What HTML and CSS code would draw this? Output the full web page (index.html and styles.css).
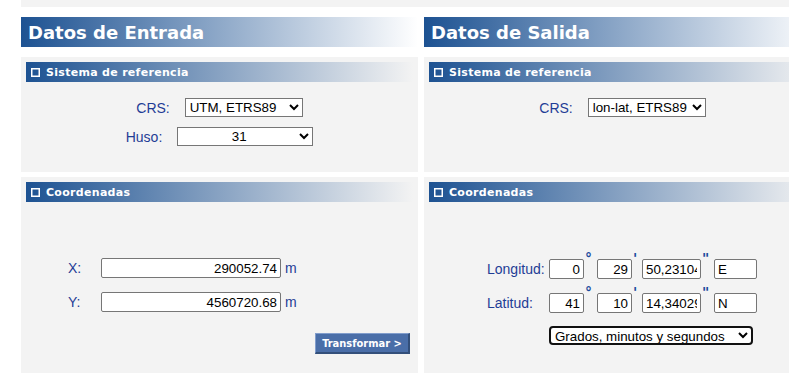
FILE: index.html
```html
<!DOCTYPE html>
<html lang="es">
<head>
<meta charset="utf-8">
<title>Transformación de coordenadas</title>
<link rel="stylesheet" href="styles.css">
</head>
<body>
<div class="page">
  <div class="top-strip"></div>
  <div class="columns">
    <section class="col">
      <h2 class="col-title">Datos de Entrada</h2>
      <div class="box box-ref">
        <div class="box-head"><svg class="chk" width="9" height="9" viewBox="0 0 9 9"><rect x="0.75" y="0.75" width="7.5" height="7.5" fill="none" stroke="#fff" stroke-width="1.5"/></svg><span>Sistema de referencia</span></div>
        <div class="ref-rows">
          <div class="ref-row"><span class="lbl">CRS:</span><select class="sel sel-crs"><option>UTM, ETRS89</option></select></div>
          <div class="ref-row"><span class="lbl">Huso:</span><select class="sel sel-huso"><option>31</option></select></div>
        </div>
      </div>
      <div class="box box-coord">
        <div class="box-head"><svg class="chk" width="9" height="9" viewBox="0 0 9 9"><rect x="0.75" y="0.75" width="7.5" height="7.5" fill="none" stroke="#fff" stroke-width="1.5"/></svg><span>Coordenadas</span></div>
        <div class="xy-rows">
          <div class="xy-row"><span class="lbl xy-lbl">X:</span><input class="inp inp-xy" type="text" value="290052.74"><span class="lbl unit">m</span></div>
          <div class="xy-row"><span class="lbl xy-lbl">Y:</span><input class="inp inp-xy" type="text" value="4560720.68"><span class="lbl unit">m</span></div>
          <button class="btn" type="button">Transformar &gt;</button>
        </div>
      </div>
    </section>
    <section class="col">
      <h2 class="col-title">Datos de Salida</h2>
      <div class="box box-ref">
        <div class="box-head"><svg class="chk" width="9" height="9" viewBox="0 0 9 9"><rect x="0.75" y="0.75" width="7.5" height="7.5" fill="none" stroke="#fff" stroke-width="1.5"/></svg><span>Sistema de referencia</span></div>
        <div class="ref-rows">
          <div class="ref-row"><span class="lbl">CRS:</span><select class="sel sel-crs"><option>lon-lat, ETRS89</option></select></div>
        </div>
      </div>
      <div class="box box-coord">
        <div class="box-head"><svg class="chk" width="9" height="9" viewBox="0 0 9 9"><rect x="0.75" y="0.75" width="7.5" height="7.5" fill="none" stroke="#fff" stroke-width="1.5"/></svg><span>Coordenadas</span></div>
        <div class="ll-rows">
          <div class="ll-row"><span class="lbl ll-lbl">Longitud:</span><input class="inp inp-deg" type="text" value="0"><span class="mark mark-deg">°</span><input class="inp inp-min" type="text" value="29"><span class="mark mark-min">'</span><input class="inp inp-sec" type="text" value="50,231047"><span class="mark mark-sec">"</span><input class="inp inp-hem" type="text" value="E"></div>
          <div class="ll-row"><span class="lbl ll-lbl">Latitud:</span><input class="inp inp-deg" type="text" value="41"><span class="mark mark-deg">°</span><input class="inp inp-min" type="text" value="10"><span class="mark mark-min">'</span><input class="inp inp-sec" type="text" value="14,340298"><span class="mark mark-sec">"</span><input class="inp inp-hem" type="text" value="N"></div>
          <select class="sel sel-fmt"><option>Grados, minutos y segundos</option></select>
        </div>
      </div>
    </section>
  </div>
</div>
</body>
</html>
```
FILE: styles.css
```css
html, body {
  margin: 0;
  padding: 0;
  background: #fff;
}
body {
  width: 789px;
  height: 373px;
  overflow: hidden;
  font-family: "Liberation Sans", Arial, sans-serif;
}
.page {
  padding-left: 21px;
  overflow: hidden;
}
.top-strip {
  height: 7px;
  background: #f3f3f3;
}
.columns {
  display: grid;
  grid-template-columns: 397px 397px;
  column-gap: 6px;
  margin-top: 10px;
}
.col {
  display: flex;
  flex-direction: column;
}
.col-title {
  margin: 0;
  height: 30px;
  display: flex;
  align-items: center;
  padding-left: 7px;
  font: bold 18px "DejaVu Sans", Verdana, sans-serif;
  color: #fff;
  background: linear-gradient(90deg, #1d5292 0%, #ffffff 100%);
}
.box {
  background: #f3f3f3;
  padding: 5px;
  box-sizing: border-box;
  display: flex;
  flex-direction: column;
}
.box-ref {
  margin-top: 10px;
  height: 115px;
}
.box-coord {
  margin-top: 5px;
  height: 200px;
}
.box-head {
  height: 20px;
  display: flex;
  align-items: center;
  gap: 6px;
  padding-left: 5px;
  background: linear-gradient(90deg, #1d5292 0%, #f3f3f3 100%);
  color: #fff;
  font: bold 11px "DejaVu Sans", Verdana, sans-serif;
  letter-spacing: 0.3px;
}
.chk {
  flex: none;
  display: block;
}
.lbl {
  font-size: 14px;
  color: #1f3d96;
}
.sel {
  font: 13.33px "Liberation Sans", Arial, sans-serif;
  height: 19px;
  box-sizing: border-box;
  color: #000;
  background-color: #fff;
}
.ref-rows {
  padding-top: 16px;
  display: flex;
  flex-direction: column;
  gap: 10px;
}
.ref-row {
  display: flex;
  justify-content: center;
  align-items: center;
  gap: 15px;
}
.sel-crs {
  width: 118px;
}
.sel-huso {
  width: 136px;
  text-align: center;
  text-align-last: center;
}
.inp {
  font: 13.33px "Liberation Sans", Arial, sans-serif;
  color: #000;
  height: 20px;
  box-sizing: border-box;
  border: 1px solid #767676;
  border-radius: 2px;
  background: #fff;
  padding: 1px 3px;
  margin: 0;
}
.xy-rows {
  padding-top: 56px;
  display: flex;
  flex-direction: column;
  gap: 14px;
}
.xy-row {
  display: flex;
  align-items: center;
}
.xy-lbl {
  margin-left: 42px;
  width: 33px;
}
.inp-xy {
  width: 180px;
  text-align: right;
}
.unit {
  margin-left: 4px;
}
.btn {
  align-self: flex-end;
  margin: 7px 3px 0 0;
  width: 95px;
  height: 21px;
  padding: 0;
  background: #4a6ea8;
  color: #fff;
  font: bold 11px "DejaVu Sans Condensed", "DejaVu Sans", sans-serif;
  border-style: solid;
  border-width: 1px 2px 2px 1px;
  border-color: #819dcc #334f7a #334f7a #819dcc;
}
.ll-rows {
  padding-top: 57px;
  display: flex;
  flex-direction: column;
  gap: 14px;
}
.ll-row {
  display: flex;
  align-items: center;
}
.ll-lbl {
  margin-left: 58px;
  width: 62px;
  flex: none;
}
.inp-deg, .inp-min {
  width: 35px;
  text-align: right;
}
.inp-sec {
  width: 59px;
}
.inp-hem {
  width: 43px;
}
.mark {
  align-self: flex-start;
  margin-top: -8px;
  box-sizing: border-box;
  padding-left: 1px;
  font: bold 14px/14px "DejaVu Sans", Verdana, sans-serif;
  color: #1a4a9c;
  flex: none;
}
.mark-deg, .mark-sec {
  width: 13px;
}
.mark-min {
  width: 10px;
}
.sel-fmt {
  margin: -1px 0 0 120px;
  width: 204px;
  height: 19px;
  align-self: flex-start;
  border: 2px solid #111;
  border-radius: 4px;
}
```
